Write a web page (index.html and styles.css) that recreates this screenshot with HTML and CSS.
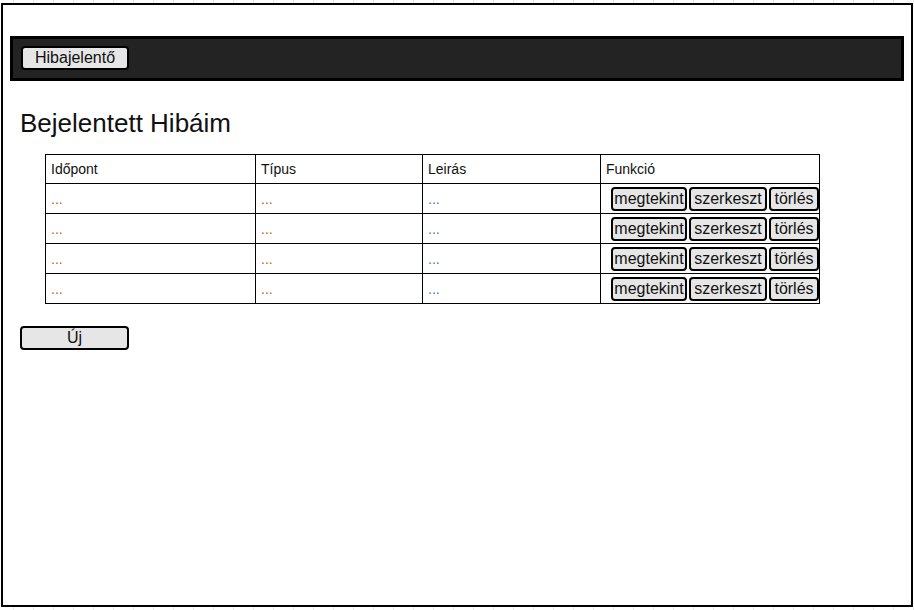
FILE: index.html
```html
<!DOCTYPE html>
<html lang="hu">
<head>
<meta charset="utf-8">
<title>Bejelentett Hibáim</title>
<link rel="stylesheet" href="styles.css">
</head>
<body>
<div class="frame">
  <nav class="topbar">
    <button class="btn btn-brand">Hibajelentő</button>
  </nav>
  <main class="content">
    <h1 class="title">Bejelentett Hibáim</h1>
    <table class="bugs">
      <thead>
        <tr>
          <th class="c1">Időpont</th>
          <th class="c2">Típus</th>
          <th class="c3">Leirás</th>
          <th class="c4">Funkció</th>
        </tr>
      </thead>
      <tbody>
        <tr>
          <td class="dots-warm">...</td><td class="dots-warm">...</td><td class="dots-cool">...</td>
          <td class="actions"><button class="btn b-view">megtekint</button><button class="btn b-edit">szerkeszt</button><button class="btn b-del">törlés</button></td>
        </tr>
        <tr>
          <td class="dots-warm">...</td><td class="dots-warm">...</td><td class="dots-cool">...</td>
          <td class="actions"><button class="btn b-view">megtekint</button><button class="btn b-edit">szerkeszt</button><button class="btn b-del">törlés</button></td>
        </tr>
        <tr>
          <td class="dots-warm">...</td><td class="dots-warm">...</td><td class="dots-cool">...</td>
          <td class="actions"><button class="btn b-view">megtekint</button><button class="btn b-edit">szerkeszt</button><button class="btn b-del">törlés</button></td>
        </tr>
        <tr>
          <td class="dots-warm">...</td><td class="dots-warm">...</td><td class="dots-cool">...</td>
          <td class="actions"><button class="btn b-view">megtekint</button><button class="btn b-edit">szerkeszt</button><button class="btn b-del">törlés</button></td>
        </tr>
      </tbody>
    </table>
    <button class="btn btn-new">Új</button>
  </main>
</div>
</body>
</html>
```

FILE: styles.css
```css
html {
  margin: 0;
  padding: 0;
  background:
    repeating-linear-gradient(to right, transparent 0 13px, #e6e6e6 13px 14px, transparent 14px 20px) top left / 100% 3px no-repeat,
    repeating-linear-gradient(to right, transparent 0 13px, #e6e6e6 13px 14px, transparent 14px 20px) bottom left / 100% 3px no-repeat,
    #ffffff;
}

body {
  margin: 0;
  padding: 0;
  font-family: "Liberation Sans", Arial, sans-serif;
  color: #111;
}

.frame {
  box-sizing: border-box;
  width: 912px;
  height: 604px;
  margin: 3px 1px;
  border: 2px solid #000;
  background: #fff;
  padding: 31px 7px 0 7px;
}

.topbar {
  box-sizing: border-box;
  height: 45px;
  background: #232323;
  border: 3px solid #000;
  padding: 7px 8px;
  display: flex;
  align-items: flex-start;
}

.btn {
  box-sizing: border-box;
  font-family: "Liberation Sans", Arial, sans-serif;
  font-size: 16px;
  color: #111;
  background: #e6e6e6;
  border: 2px solid #000;
  border-radius: 4px;
  height: 24px;
  padding: 0;
  margin: 0;
  line-height: 18px;
  text-align: center;
  white-space: nowrap;
  overflow: hidden;
}

.btn-brand {
  width: 108px;
}

.content {
  padding: 0 0 0 10px;
}

.title {
  font-size: 26px;
  font-weight: normal;
  margin: 0;
  padding-top: 27px;
  line-height: 30px;
  color: #111;
}

.bugs {
  border-collapse: collapse;
  margin: 16px 0 0 25px;
  width: 775px;
  font-size: 14px;
}

.bugs th,
.bugs td {
  border: 1px solid #000;
  padding: 0 5px;
  text-align: left;
  vertical-align: middle;
}

.bugs th {
  font-weight: normal;
  height: 28px;
  color: #111;
}

.bugs td {
  height: 29px;
}

.c1 { width: 199px; }
.c2 { width: 156px; }
.c3 { width: 167px; }
.c4 { width: 208px; }

.dots-warm { color: #c06010; }
.dots-cool { color: #2a7ac4; }

.bugs td.actions {
  padding: 0 0 0 10px;
}

.actions .btn {
  height: 24px;
  vertical-align: middle;
}

.b-view { width: 76px; }
.b-edit { width: 78px; margin-left: 2px !important; }
.b-del { width: 50px; margin-left: 2px !important; }

.btn-new {
  display: block;
  width: 109px;
  margin-top: 22px;
}
```
